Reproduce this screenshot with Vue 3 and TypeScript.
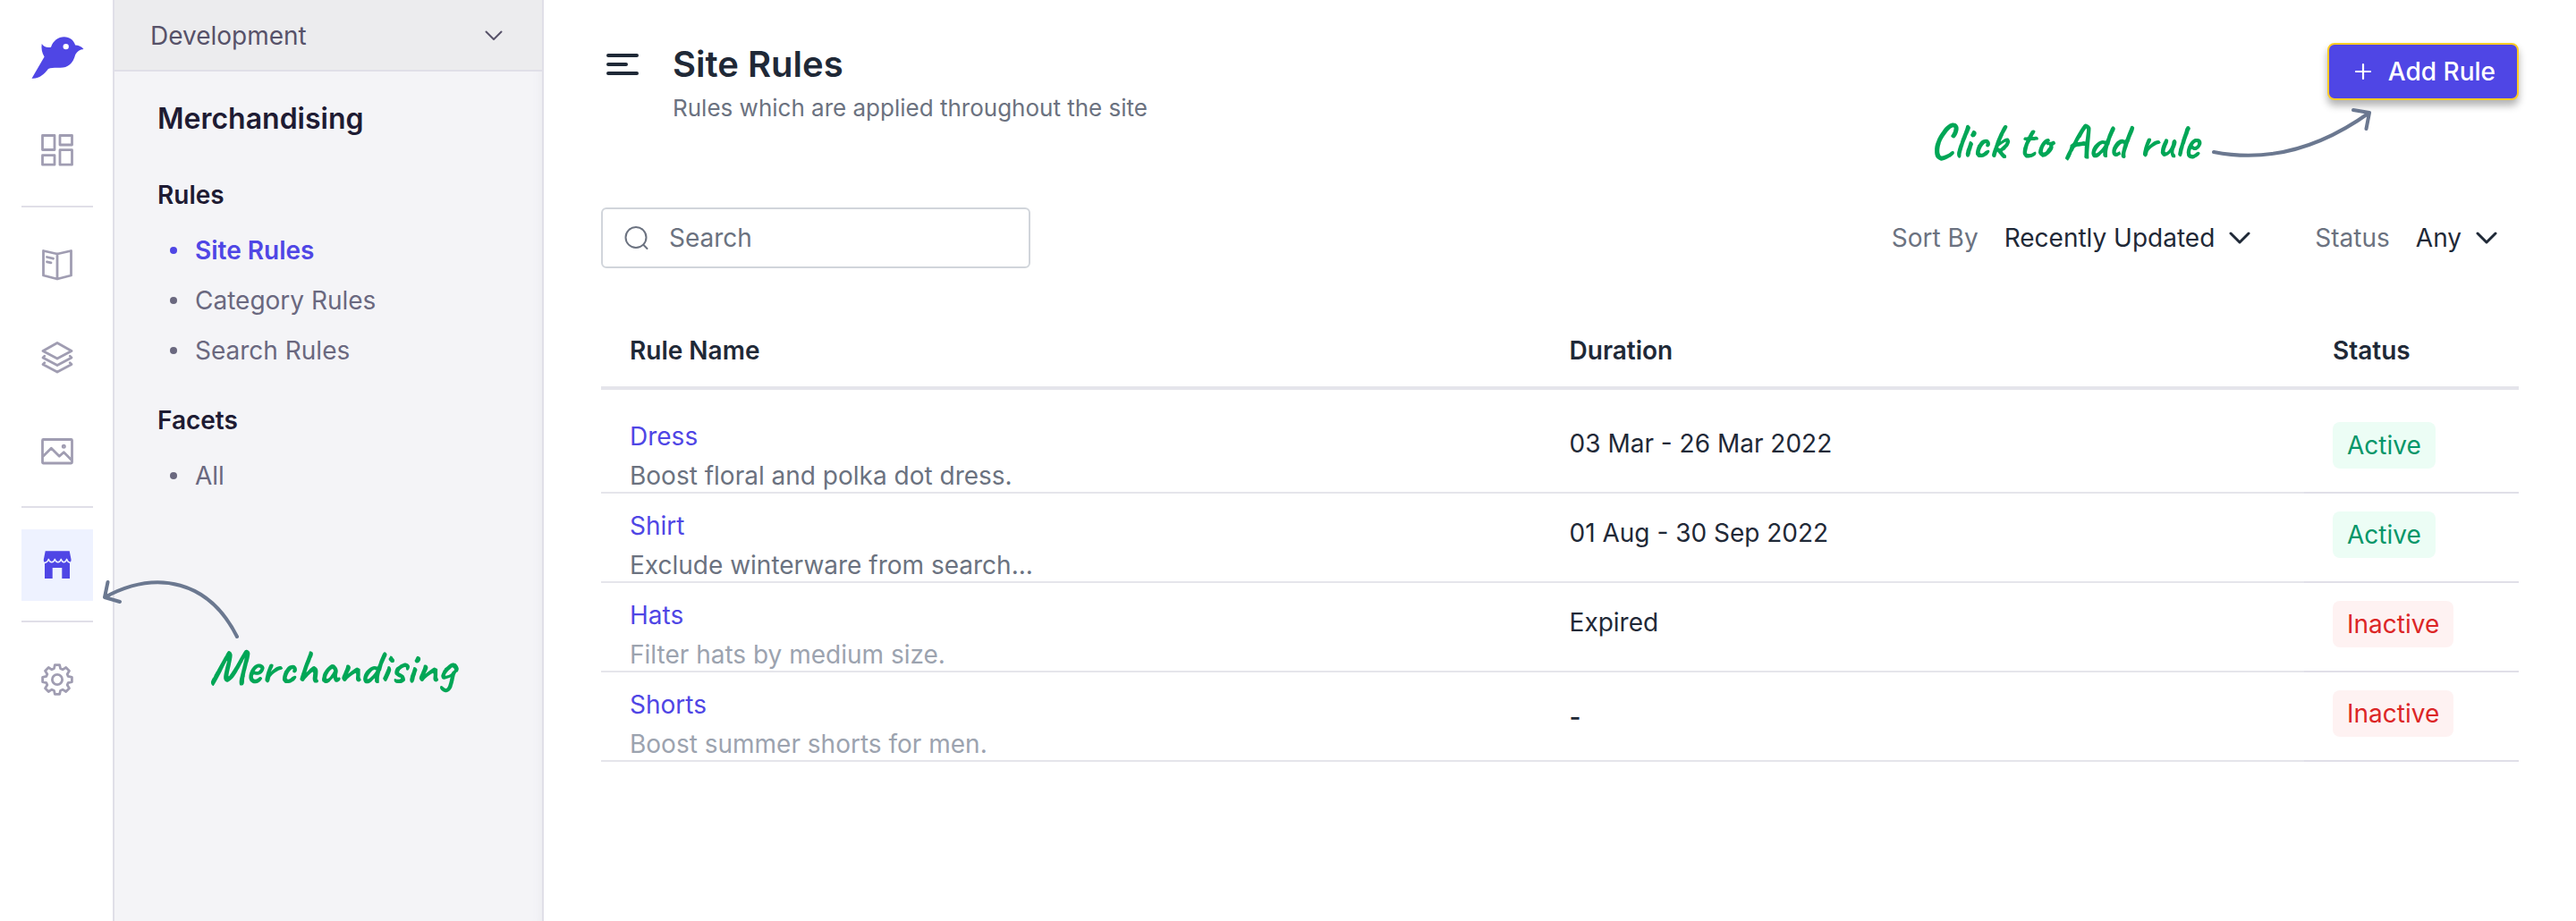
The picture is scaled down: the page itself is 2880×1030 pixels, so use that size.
<script setup lang="ts">
import { ref } from 'vue'

type IconName = 'dashboard' | 'catalog' | 'layers' | 'media' | 'store' | 'settings'

interface RailItem {
  icon: IconName
  label: string
  active?: boolean
}

interface Rule {
  name: string
  description: string
  duration: string
  active: boolean
}

const railGroups: RailItem[][] = [
  [{ icon: 'dashboard', label: 'Dashboard' }],
  [
    { icon: 'catalog', label: 'Catalog' },
    { icon: 'layers', label: 'Collections' },
    { icon: 'media', label: 'Media' },
  ],
  [{ icon: 'store', label: 'Merchandising', active: true }],
  [{ icon: 'settings', label: 'Settings' }],
]

const sections = [
  { title: 'Rules', items: ['Site Rules', 'Category Rules', 'Search Rules'] },
  { title: 'Facets', items: ['All'] },
]
const current = 'Site Rules'

const rules: Rule[] = [
  { name: 'Dress', description: 'Boost floral and polka dot dress.', duration: '03 Mar - 26 Mar 2022', active: true },
  { name: 'Shirt', description: 'Exclude winterware from search...', duration: '01 Aug - 30 Sep 2022', active: true },
  { name: 'Hats', description: 'Filter hats by medium size.', duration: 'Expired', active: false },
  { name: 'Shorts', description: 'Boost summer shorts for men.', duration: '-', active: false },
]

const environment = ref('Development')
const search = ref('')
const sortBy = ref('Recently Updated')
const status = ref('Any')

// Outline of an eight-toothed gear centred in a 36 unit box.
function gearPath(): string {
  const tooth: [number, number][] = [
    [-3.6, -12.2],
    [-2.6, -16.4],
    [2.6, -16.4],
    [3.6, -12.2],
  ]
  const points: string[] = []
  for (let i = 0; i < 8; i++) {
    const a = (i * Math.PI) / 4
    for (const [x, y] of tooth) {
      const px = 18 + x * Math.cos(a) - y * Math.sin(a)
      const py = 18 + x * Math.sin(a) + y * Math.cos(a)
      points.push(`${px.toFixed(2)} ${py.toFixed(2)}`)
    }
  }
  return `M${points.join('L')}Z`
}
const gear = gearPath()
</script>

<template>
  <div class="app">
    <nav class="rail" aria-label="Primary">
      <a href="#" class="logo" aria-label="Home">
        <svg width="64" height="64" viewBox="0 0 64 64" aria-hidden="true">
          <path
            fill="#4f46e5"
            fill-rule="evenodd"
            d="M14.7 17C17 20.500 20.500 21.600 25 20.700C27.500 13.500 33 9.300 39.700 9.300C46 9.300 50.300 13 52.200 18.500C56 18.600 59.300 20 61.500 22.900C57.500 23.300 54 25.300 52.300 29C49.500 39.500 43.500 44 35 43.800C30 43.800 25.500 43.600 22 45C17.500 50.500 12.500 56.300 3.500 55.700L17.600 31.400C14.800 27 14 22 14.700 17ZM41.700 16.900a3.200 3.200 0 1 0 0 6.400a3.200 3.200 0 1 0 0-6.400Z"
          />
        </svg>
      </a>
      <div v-for="(group, g) in railGroups" :key="g" class="rail-group">
        <a
          v-for="item in group"
          :key="item.icon"
          href="#"
          class="rail-link"
          :class="{ active: item.active }"
          :aria-label="item.label"
        >
          <svg
            width="36"
            height="36"
            viewBox="0 0 36 36"
            fill="none"
            stroke="currentColor"
            stroke-width="2.8"
            stroke-linecap="round"
            stroke-linejoin="round"
            aria-hidden="true"
          >
            <g v-if="item.icon === 'dashboard'">
              <rect x="1.5" y="1.5" width="13.5" height="16" />
              <rect x="21" y="1.5" width="13.500" height="10.500" />
              <rect x="1.500" y="23.700" width="13.500" height="10.500" />
              <rect x="21" y="17.700" width="13.500" height="16.500" />
            </g>
            <g v-else-if="item.icon === 'catalog'">
              <path d="M2.500 2.500L18 6L33.500 2.500V30L18 34L2.500 30ZM18 6V34" />
              <path d="M6.500 9.500l7 1.700M6.500 14.900l4.500 1" />
            </g>
            <g v-else-if="item.icon === 'layers'">
              <path d="M18 1.500L34 10.500L18 19L2 10.500Z" />
              <path d="M3.800 16.300L2 18L18 26.500L34 18L32.200 16.300" />
              <path d="M3.800 23.800L2 25.500L18 34L34 25.500L32.200 23.800" />
            </g>
            <g v-else-if="item.icon === 'media'">
              <rect x="1.500" y="5.500" width="33" height="26.500" rx="1" />
              <path d="M2.500 24L11.300 15.300L20.300 24.300L25.300 19.700L33.500 28" />
              <circle cx="25.300" cy="13.300" r="1.400" stroke-width="2.200" />
            </g>
            <g v-else-if="item.icon === 'store'" stroke="none">
              <path
                fill="currentColor"
                d="M4.700 2.300H31.700L33.600 12Q33.600 14.700 32 15.200V33H23.300V21H12.700V33H4V15.200Q2.600 14.700 2.800 12Z"
              />
              <path
                stroke="#eef2ff"
                stroke-width="1.400"
                d="M2 15.500Q6.800 16 8.300 11.300Q9.300 14.800 11.800 14.800T15.300 11.300Q16.300 14.800 18.800 14.800T22.300 11.300Q23.300 14.800 25.400 14.800T28.600 11.300Q30 16 34.500 15.300"
              />
            </g>
            <g v-else>
              <path :d="gear" />
              <circle cx="18" cy="18" r="5.600" />
            </g>
          </svg>
        </a>
      </div>
    </nav>

    <aside class="panel">
      <div class="env">
        <select v-model="environment" aria-label="Environment">
          <option>Development</option>
          <option>Production</option>
        </select>
        <svg class="chevron" width="20" height="12" viewBox="0 0 20 12" aria-hidden="true">
          <path d="M1.500 1.500L10 10L18.500 1.500" stroke-width="2" />
        </svg>
      </div>
      <div class="menu">
        <h2 class="menu-title">Merchandising</h2>
        <section v-for="section in sections" :key="section.title" class="menu-section">
          <h3 class="menu-heading">{{ section.title }}</h3>
          <ul class="menu-list">
            <li v-for="item in section.items" :key="item">
              <a href="#" class="menu-link" :class="{ current: item === current }">{{ item }}</a>
            </li>
          </ul>
        </section>
      </div>
    </aside>

    <main class="main">
      <header class="header">
        <button type="button" class="menu-button" aria-label="Toggle menu">
          <svg width="36" height="24" viewBox="0 0 36 24" aria-hidden="true">
            <path d="M2 2H34M2 12H22M2 22H34" stroke="currentColor" stroke-width="4" stroke-linecap="round" />
          </svg>
        </button>
        <div class="heading">
          <h1 class="title">Site Rules</h1>
          <p class="subtitle">Rules which are applied throughout the site</p>
        </div>
        <button type="button" class="add-button">
          <svg width="20" height="20" viewBox="0 0 20 20" aria-hidden="true">
            <path d="M10 2V18M2 10H18" stroke="currentColor" stroke-width="2.200" stroke-linecap="round" />
          </svg>
          Add Rule
        </button>
        <div class="note note-add">
          <span>Click to Add rule</span>
          <svg class="arrow" width="180" height="56" viewBox="0 0 180 56" aria-hidden="true">
            <path d="M3 50C59 61 117 49 177 6M159 3L177 6L173.500 24" />
          </svg>
        </div>
      </header>

      <div class="toolbar">
        <label class="search">
          <svg width="28" height="28" viewBox="0 0 28 28" fill="none" stroke="currentColor" stroke-width="2" stroke-linecap="round" aria-hidden="true">
            <circle cx="13" cy="13.500" r="11.500" />
            <path d="M21.300 21.800L25.500 26" />
          </svg>
          <input v-model="search" type="search" placeholder="Search" aria-label="Search" />
        </label>
        <div class="filters">
          <div class="filter">
            <label for="sort-by">Sort By</label>
            <select id="sort-by" v-model="sortBy">
              <option>Recently Updated</option>
              <option>Name</option>
            </select>
            <svg class="chevron" width="24" height="14" viewBox="0 0 24 14" aria-hidden="true">
              <path d="M2 2L12 12L22 2" stroke-width="3" />
            </svg>
          </div>
          <div class="filter">
            <label for="status">Status</label>
            <select id="status" v-model="status">
              <option>Any</option>
              <option>Active</option>
              <option>Inactive</option>
            </select>
            <svg class="chevron" width="24" height="14" viewBox="0 0 24 14" aria-hidden="true">
              <path d="M2 2L12 12L22 2" stroke-width="3" />
            </svg>
          </div>
        </div>
      </div>

      <table class="rules">
        <colgroup>
          <col class="col-name" />
          <col />
          <col class="col-status" />
        </colgroup>
        <thead>
          <tr>
            <th scope="col">Rule Name</th>
            <th scope="col">Duration</th>
            <th scope="col">Status</th>
          </tr>
        </thead>
        <tbody>
          <tr v-for="rule in rules" :key="rule.name">
            <td>
              <a href="#" class="rule-name">{{ rule.name }}</a>
              <p class="rule-text" :class="{ muted: !rule.active }">{{ rule.description }}</p>
            </td>
            <td class="duration" :class="{ blank: rule.duration === '-' }">{{ rule.duration }}</td>
            <td class="status">
              <span class="badge" :class="rule.active ? 'on' : 'off'">{{ rule.active ? 'Active' : 'Inactive' }}</span>
            </td>
          </tr>
        </tbody>
      </table>
    </main>

    <div class="note note-merch">
      <svg class="arrow" width="156" height="68" viewBox="0 0 156 68" aria-hidden="true">
        <path d="M151 64C120 2 62 -12 3 20M6.500 3L3 20L20 25" />
      </svg>
      <span>Merchandising</span>
    </div>
  </div>
</template>

<style>
body {
  margin: 0;
  background: #fff;
}
</style>

<style scoped>
.app {
  position: relative;
  display: flex;
  min-height: 100vh;
  font-family: Inter, 'Liberation Sans', sans-serif;
  font-size: 28px;
  line-height: 36px;
  color: #1f2937;
}
.app *,
.app *::before {
  box-sizing: border-box;
}
h1,
h2,
h3,
p,
ul {
  margin: 0;
  padding: 0;
}
a {
  text-decoration: none;
}
button,
select,
input {
  margin: 0;
  padding: 0;
  border: 0;
  background: none;
  font: inherit;
  color: inherit;
}
select {
  appearance: none;
  field-sizing: content;
  height: 36px;
}
svg {
  display: block;
  flex: none;
}
.chevron path {
  fill: none;
  stroke: currentColor;
  stroke-linecap: round;
  stroke-linejoin: round;
}

.rail {
  flex: none;
  width: 128px;
  padding: 32px 22px 0 24px;
  border-right: 2px solid #e0dfe8;
}
.logo {
  display: flex;
  justify-content: center;
  margin: 0 8px 32px;
}
.rail-group {
  display: flex;
  flex-direction: column;
  gap: 24px;
}
.rail-group + .rail-group {
  margin-top: 22px;
  padding-top: 24px;
  border-top: 2px solid #e0dfe8;
}
.rail-link {
  display: flex;
  align-items: center;
  justify-content: center;
  width: 80px;
  height: 80px;
  color: #a09db2;
}
.rail-link.active {
  background: #eef2ff;
  color: #4f46e5;
}

.panel {
  flex: none;
  width: 480px;
  border-right: 2px solid #e0dfe8;
  background: #f4f4f7;
  box-shadow: inset -10px 0 10px -8px #ececf0;
}
.env {
  display: flex;
  align-items: center;
  justify-content: space-between;
  height: 80px;
  padding: 2px 44px 0 40px;
  border-bottom: 2px solid #e0dfe8;
  background: #ececee;
  color: #575269;
}
.menu {
  padding: 32px 48px;
  color: #1e1b33;
}
.menu-title {
  font-size: 32px;
  line-height: 42px;
  font-weight: 600;
}
.menu-section {
  margin-top: 46px;
}
.menu-section + .menu-section {
  margin-top: 32px;
}
.menu-heading {
  margin-bottom: 16px;
  font-size: 28px;
  line-height: 36px;
  font-weight: 600;
}
.menu-list {
  list-style: none;
}
.menu-link {
  display: flex;
  align-items: center;
  gap: 20px;
  padding-left: 14px;
  line-height: 56px;
  color: #6a687f;
}
.menu-link::before {
  content: '';
  width: 8px;
  height: 8px;
  border-radius: 50%;
  background: currentColor;
}
.menu-link.current {
  font-weight: 600;
  color: #4f46e5;
}

.main {
  flex: 1;
  min-width: 0;
  padding: 48px 64px;
}
.header {
  position: relative;
  display: flex;
  align-items: flex-start;
}
.menu-button {
  display: flex;
  align-items: center;
  justify-content: center;
  width: 48px;
  height: 48px;
}
.heading {
  flex: 1;
  margin-left: 32px;
}
.title {
  font-size: 40px;
  line-height: 48px;
  font-weight: 600;
}
.subtitle {
  margin-top: 8px;
  font-size: 26px;
  line-height: 34px;
  color: #6b7280;
}
.add-button {
  display: flex;
  align-items: center;
  gap: 18px;
  height: 64px;
  padding: 0 24px 0 28px;
  border: 2px solid #ffcc24;
  border-radius: 8px;
  background: #4f46e5;
  box-shadow: 0 6px 8px rgba(0, 0, 0, 0.3);
  font-weight: 500;
  color: #fff;
}

.toolbar {
  display: flex;
  align-items: center;
  justify-content: space-between;
  margin-top: 94px;
}
.search {
  display: flex;
  align-items: center;
  gap: 22px;
  width: 480px;
  height: 68px;
  padding: 0 24px;
  border: 2px solid #d1d5db;
  border-radius: 6px;
  color: #6b7280;
}
.search input {
  flex: 1;
  min-width: 0;
  outline: none;
}
.search input::placeholder {
  color: #6b7280;
  opacity: 1;
}
.filters {
  display: flex;
  gap: 72px;
  padding-right: 24px;
}
.filter {
  display: flex;
  align-items: center;
}
.filter label {
  margin-right: 29px;
  color: #6b7280;
}
.filter select {
  margin-right: 16px;
}

.rules {
  width: 100%;
  margin-top: 52px;
  border-collapse: separate;
  border-spacing: 0;
  table-layout: fixed;
}
.col-name {
  width: 49%;
}
.col-status {
  width: 240px;
}
th {
  height: 84px;
  padding: 0 32px;
  border-bottom: 4px solid #e5e5eb;
  font-weight: 600;
  text-align: left;
}
td {
  padding: 18px 32px 0;
  border-bottom: 2px solid #e5e5eb;
  vertical-align: top;
}
.rule-name {
  display: block;
  color: #4f46e5;
}
.rule-text {
  margin-top: 8px;
  color: #6b7280;
}
.rule-text.muted {
  color: #9ca3af;
}
.duration {
  padding-top: 26px;
}
.duration.blank {
  font-weight: 500;
  line-height: 48px;
}
.status {
  padding-top: 20px;
  border-color: #e0dfe8;
}
tbody tr:first-child td {
  border-top: 16px solid transparent;
}
.badge {
  display: inline-block;
  padding: 8px 16px;
  border-radius: 8px;
}
.badge.on {
  background: #ecfdf5;
  color: #059669;
}
.badge.off {
  background: #fef2f2;
  color: #dc2626;
}

.note {
  position: absolute;
  font-family: Caveat, cursive;
  font-size: 54px;
  line-height: 60px;
  font-weight: 700;
  white-space: nowrap;
  color: #00a656;
}
.arrow path {
  fill: none;
  stroke: #6b7890;
  stroke-width: 4;
  stroke-linecap: round;
  stroke-linejoin: round;
}
.note-add {
  top: 72px;
  right: 164px;
  display: flex;
  gap: 14px;
}
.note-add span {
  margin-top: 8px;
}
.note-merch {
  top: 648px;
  left: 114px;
}
.note-merch span {
  display: block;
  margin-left: 120px;
}
</style>
